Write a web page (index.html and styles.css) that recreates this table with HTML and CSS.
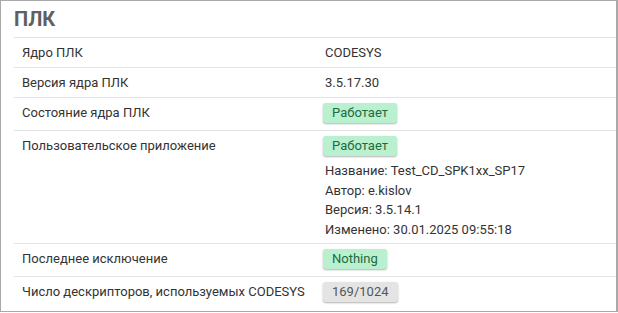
FILE: index.html
```html
<!DOCTYPE html>
<html lang="ru">
<head>
  <meta charset="UTF-8">
  <title>ПЛК</title>
  <link rel="stylesheet" href="styles.css">
</head>
<body>
  <!-- Сведения о ПЛК -->
  <div class="panel">
    <div class="panel-title">ПЛК</div>
    <table class="info-table">
      <tr>
        <td class="label">Ядро ПЛК</td>
        <td class="value">CODESYS</td>
      </tr>
      <tr>
        <td class="label">Версия ядра ПЛК</td>
        <td class="value">3.5.17.30</td>
      </tr>
      <tr>
        <td class="label">Состояние ядра ПЛК</td>
        <td class="value has-badge"><span class="badge badge-ok">Работает</span></td>
      </tr>
      <tr>
        <td class="label">Пользовательское приложение</td>
        <td class="value has-badge app-cell">
          <span class="badge badge-ok">Работает</span>
          <div class="app-info">
            <div>Название: Test_CD_SPK1xx_SP17</div>
            <div>Автор: e.kislov</div>
            <div>Версия: 3.5.14.1</div>
            <div>Изменено: 30.01.2025 09:55:18</div>
          </div>
        </td>
      </tr>
      <tr>
        <td class="label">Последнее исключение</td>
        <td class="value has-badge"><span class="badge badge-ok">Nothing</span></td>
      </tr>
      <tr>
        <td class="label">Число дескрипторов, используемых CODESYS</td>
        <td class="value has-badge"><span class="badge badge-muted">169/1024</span></td>
      </tr>
    </table>
  </div>
</body>
</html>
```

FILE: styles.css
```css
body {
  margin: 0;
  font-family: Roboto, "Liberation Sans", sans-serif;
  font-size: 13px;
  color: #333;
  background: #fff;
}

/* Рамка блока */
.panel {
  width: 618px;
  box-sizing: border-box;
  border: 1px solid #a9a9a9;
  border-right-width: 2px;
  padding: 0 0 2px 13px;
}

.panel-title {
  font-size: 20px;
  font-weight: bold;
  line-height: 24px;
  color: #606060;
  padding: 6px 0;
}

/* Таблица параметров */
.info-table {
  width: 602px;
  border-collapse: collapse;
  table-layout: fixed;
}

.info-table td {
  border-top: 1px solid #e3e3e3;
  padding: 6px 8px;
  line-height: 17px;
  vertical-align: top;
}

.info-table td.label {
  width: 287px;
}

.info-table td.has-badge {
  padding-top: 5px;
  padding-bottom: 7px;
}

.info-table td.app-cell {
  padding-bottom: 4px;
}

.app-info {
  margin-top: 5px;
  line-height: 19.5px;
}

/* Метки состояния */
.badge {
  display: inline-block;
  vertical-align: top;
  margin-left: -2px;
  padding: 0 9px;
  line-height: 20px;
  border-radius: 3px;
  box-shadow: 0 1px 2px rgba(0, 0, 0, 0.3);
}

.badge-ok {
  background: #b8f0d0;
  color: #1f6b3c;
}

.badge-muted {
  background: #e4e4e4;
  color: #555;
}
```
